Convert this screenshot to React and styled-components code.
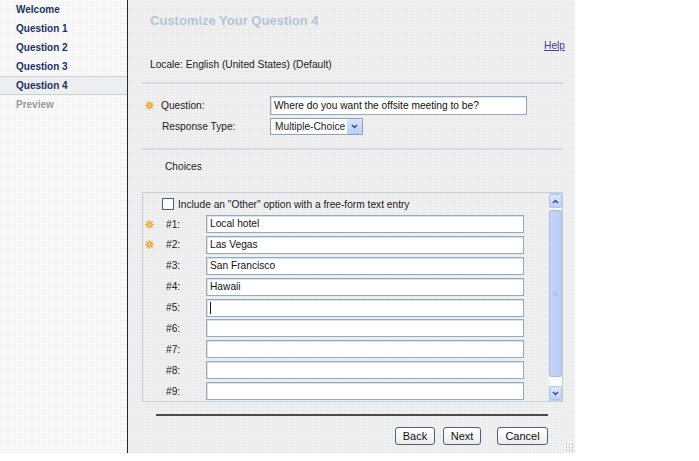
import React from 'react';
import styled, { createGlobalStyle } from 'styled-components';

const Global = createGlobalStyle`
  html, body { margin: 0; padding: 0; background: #fff; }
  body { font-family: "Liberation Sans", Arial, sans-serif; font-size: 10.2px; color: #222; }
`;

const grid = (base, line) => `
  background-color: ${base};
  background-image:
    repeating-linear-gradient(0deg, ${line} 0 1px, transparent 1px 3px),
    repeating-linear-gradient(90deg, ${line} 0 1px, transparent 1px 3px);
`;

const Frame = styled.div`
  display: flex;
  width: 575px;
  height: 453px;
`;

const Sidebar = styled.nav`
  width: 127px;
  flex-shrink: 0;
  border-right: 1px solid #2a2a2a;
  ${grid('#fbfbfb', 'rgba(0,0,0,0.018)')}
`;

const NavItem = styled.div`
  height: ${p => (p.$active ? 17 : 19)}px;
  line-height: ${p => (p.$active ? 17 : 19)}px;
  padding-left: 16px;
  font-weight: bold;
  font-size: 10px;
  color: ${p => (p.$muted ? '#9a9a9a' : '#1c3263')};
  background: ${p => (p.$active ? '#eceeef' : 'transparent')};
  border-top: ${p => (p.$active ? '1px solid #c9d2da' : 'none')};
  border-bottom: ${p => (p.$active ? '1px solid #c9d2da' : 'none')};
`;

const Main = styled.main`
  position: relative;
  flex: 1;
  padding: 0 12px 0 14px;
  ${grid('#f1f1f1', 'rgba(0,0,0,0.02)')}
`;

const Title = styled.h1`
  margin: 0;
  padding: 12px 0 0 8px;
  line-height: 18px;
  font-size: 13px;
  font-weight: bold;
  color: #b3c5d8;
`;

const HelpRow = styled.div`
  margin-top: 8px;
  line-height: 16px;
  text-align: right;
`;

const HelpLink = styled.a`
  color: #3d3d9c;
  text-decoration: underline;
  margin-right: -2px;
`;

const Locale = styled.div`
  margin-top: 3px;
  padding-left: 8px;
  line-height: 16px;
`;

const Rule = styled.div`
  height: 2px;
  margin-top: ${p => p.$top}px;
  background: #d3dae1;
`;

const FieldRow = styled.div`
  display: flex;
  align-items: center;
  height: ${p => p.$h}px;
  margin-top: ${p => p.$top}px;
`;

const StarSlot = styled.span`
  flex-shrink: 0;
  box-sizing: border-box;
  width: ${p => p.$w}px;
  display: flex;
  padding-left: ${p => p.$pad}px;
`;

const FieldLabel = styled.span`
  flex-shrink: 0;
  box-sizing: border-box;
  width: ${p => p.$w}px;
  padding-left: ${p => p.$pad || 0}px;
  white-space: nowrap;
`;

const TextBox = styled.div`
  flex-shrink: 0;
  box-sizing: border-box;
  width: ${p => p.$w}px;
  height: ${p => p.$h}px;
  line-height: ${p => p.$h - 2}px;
  padding-left: 3px;
  background: #fff;
  border: 1px solid #93a9bd;
  box-shadow: inset 1px 1px 0 #dbe3ea;
  color: #111;
  white-space: nowrap;
  overflow: hidden;
`;

const Caret = styled.span`
  display: inline-block;
  width: 1px;
  height: 12px;
  background: #111;
  vertical-align: middle;
`;

const Select = styled.div`
  flex-shrink: 0;
  box-sizing: border-box;
  display: flex;
  width: 93px;
  height: 17px;
  background: #fff;
  border: 1px solid #8aa2ba;
  white-space: nowrap;
`;

const SelectText = styled.span`
  flex: 1;
  padding-left: 4px;
  line-height: 15px;
`;

const ArrowBtn = styled.span`
  width: 15px;
  display: flex;
  align-items: center;
  justify-content: center;
  background: linear-gradient(#dae5fb, #b9cdf6);
  border-left: 1px solid #fff;
  border-radius: 2px;
`;

const Choices = styled.div`
  margin-top: 9px;
  padding-left: 23px;
  line-height: 16px;
`;

const ChoiceBox = styled.div`
  display: flex;
  margin-top: 17px;
  height: 210px;
  box-sizing: border-box;
  border: 1px solid #c3cfda;
  border-right: none;
`;

const ChoiceList = styled.div`
  flex: 1;
  padding-top: 4px;
`;

const CheckRow = styled.label`
  display: flex;
  align-items: center;
  height: 14px;
  padding-left: 19px;
  margin-bottom: 4px;
`;

const CheckSquare = styled.span`
  box-sizing: border-box;
  width: 12px;
  height: 12px;
  border: 1px solid #4e5f73;
  background: #fcfcfc;
  margin-right: 4px;
`;

const ChoiceRow = styled.div`
  display: flex;
  align-items: center;
  height: 18px;
  margin-bottom: 2.875px;
`;

const Scrollbar = styled.div`
  width: 13px;
  display: flex;
  flex-direction: column;
  border: 1px solid #c3cfda;
  border-left: none;
  background: #f7f7f7;
`;

const ScrollArrow = styled.div`
  height: 12px;
  display: flex;
  align-items: center;
  justify-content: center;
  background: linear-gradient(#dde7fb, #bfd0f5);
  border: 1px solid #b2c4e6;
  border-radius: 2px;
`;

const Thumb = styled.div`
  margin-top: 2px;
  height: 165px;
  display: flex;
  align-items: center;
  justify-content: center;
  background: linear-gradient(90deg, #c5d4fa, #bccdf6);
  border: 1px solid #a8bce6;
  border-radius: 2px;
`;

const Track = styled.div`
  flex: 1;
  background: #fbfbfb;
`;

const Grip = styled.div`
  width: 5px;
  height: 1px;
  margin: 1px 0;
  background: #a8bce6;
`;

const Footer = styled.div`
  margin: 12px 15px 0 14px;
  border-top: 2px solid #4a4a4a;
  padding-top: 11px;
  display: flex;
  justify-content: flex-end;
`;

const Button = styled.button`
  box-sizing: border-box;
  width: ${p => p.$w}px;
  height: 18px;
  margin-left: ${p => p.$gap}px;
  padding: 0;
  font-family: "Liberation Sans", Arial, sans-serif;
  font-size: 11px;
  color: #111;
  background: linear-gradient(#ffffff, #ececec);
  border: 1px solid #4d6078;
  border-radius: 3px;
`;

const Resize = styled.div`
  position: absolute;
  right: 2px;
  bottom: 2px;
  width: 8px;
  height: 8px;
  background-image: radial-gradient(#b8b8b8 0.8px, transparent 1px);
  background-size: 3px 3px;
`;

const Star = () => (
  <svg width="9" height="9" viewBox="0 0 10 10">
    <g stroke="#f2a23a" strokeWidth="1.4" strokeLinecap="round">
      <line x1="5" y1="0.8" x2="5" y2="9.2" />
      <line x1="0.8" y1="5" x2="9.2" y2="5" />
      <line x1="2" y1="2" x2="8" y2="8" />
      <line x1="8" y1="2" x2="2" y2="8" />
    </g>
    <circle cx="5" cy="5" r="2.8" fill="#f6a93e" />
    <circle cx="5" cy="5" r="1.1" fill="#ffe6a8" />
  </svg>
);

const Chevron = ({ up }) => (
  <svg width="7" height="5" viewBox="0 0 7 5">
    <path d={up ? 'M1 4 L3.5 1.5 L6 4' : 'M1 1 L3.5 3.5 L6 1'} fill="none" stroke="#2d4a8a" strokeWidth="1.5" />
  </svg>
);

const nav = ['Welcome', 'Question 1', 'Question 2', 'Question 3', 'Question 4', 'Preview'];
const choices = ['Local hotel', 'Las Vegas', 'San Francisco', 'Hawaii', '', '', '', '', ''];

export default function App() {
  return (
    <>
      <Global />
      <Frame>
        <Sidebar>
          {nav.map((n, i) => (
            <NavItem key={n} $active={i === 4} $muted={i === 5}>{n}</NavItem>
          ))}
        </Sidebar>
        <Main>
          <Title>Customize Your Question 4</Title>
          <HelpRow><HelpLink href="#">Help</HelpLink></HelpRow>
          <Locale>Locale: English (United States) (Default)</Locale>
          <Rule $top={9} />
          <FieldRow $h={19} $top={12}>
            <StarSlot $w={19} $pad={3}><Star /></StarSlot>
            <FieldLabel $w={109}>Question:</FieldLabel>
            <TextBox $w={257} $h={19}>Where do you want the offsite meeting to be?</TextBox>
          </FieldRow>
          <FieldRow $h={17} $top={3}>
            <FieldLabel $w={128} $pad={20}>Response Type:</FieldLabel>
            <Select>
              <SelectText>Multiple-Choice</SelectText>
              <ArrowBtn><Chevron /></ArrowBtn>
            </Select>
          </FieldRow>
          <Rule $top={13} />
          <Choices>Choices</Choices>
          <ChoiceBox>
            <ChoiceList>
              <CheckRow><CheckSquare />Include an "Other" option with a free-form text entry</CheckRow>
              {choices.map((c, i) => (
                <ChoiceRow key={i}>
                  <StarSlot $w={23} $pad={2}>{i < 2 && <Star />}</StarSlot>
                  <FieldLabel $w={40}>#{i + 1}:</FieldLabel>
                  <TextBox $w={318} $h={18}>{i === 4 ? <Caret /> : c}</TextBox>
                </ChoiceRow>
              ))}
            </ChoiceList>
            <Scrollbar>
              <ScrollArrow><Chevron up /></ScrollArrow>
              <Thumb><div><Grip /><Grip /><Grip /></div></Thumb>
              <Track />
              <ScrollArrow><Chevron /></ScrollArrow>
            </Scrollbar>
          </ChoiceBox>
          <Footer>
            <Button $w={40} $gap={0}>Back</Button>
            <Button $w={38} $gap={8}>Next</Button>
            <Button $w={51} $gap={16}>Cancel</Button>
          </Footer>
          <Resize />
        </Main>
      </Frame>
    </>
  );
}
